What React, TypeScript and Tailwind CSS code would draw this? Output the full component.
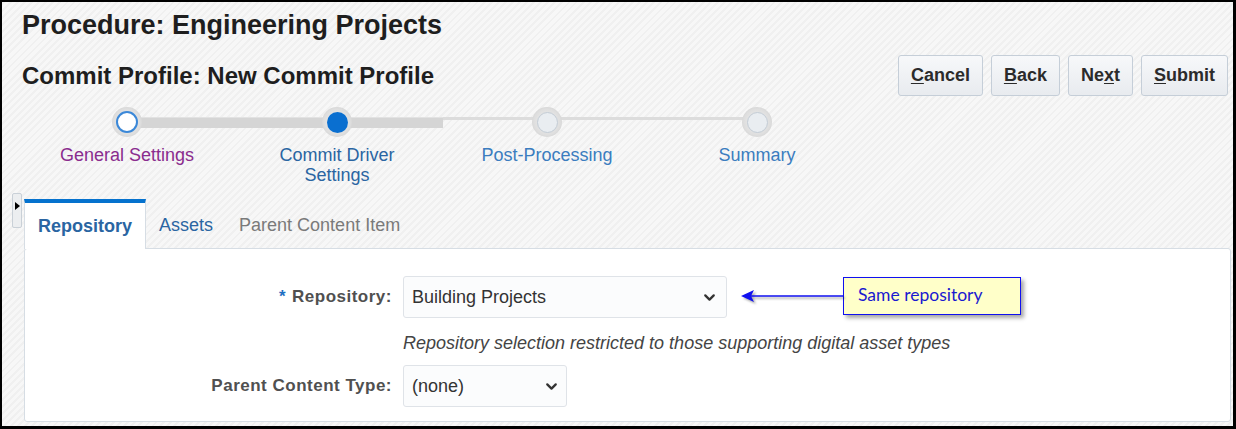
import { ChevronDown } from 'lucide-react';

const steps = [
  { label: ['General Settings'], state: 'visited' },
  { label: ['Commit Driver', 'Settings'], state: 'current' },
  { label: ['Post-Processing'], state: 'todo' },
  { label: ['Summary'], state: 'todo' },
];

const Mnemonic = ({ text, at }: { text: string; at: number }) => (
  <span>
    {text.slice(0, at)}
    <span className="underline underline-offset-2">{text[at]}</span>
    {text.slice(at + 1)}
  </span>
);

const buttons = [
  { text: 'Cancel', at: 0 },
  { text: 'Back', at: 0 },
  { text: 'Next', at: 2 },
  { text: 'Submit', at: 0 },
];

function StepDot({ state }: { state: string }) {
  return (
    <div className="w-[30px] h-[30px] rounded-full bg-[radial-gradient(circle,#f2f2f2_0%,#dedede_62%,#d2d2d2_80%,#e6e6e6_100%)] flex items-center justify-center">
      {state === 'visited' && <div className="w-[22px] h-[22px] rounded-full bg-white border-2 border-[#3b88d8]" />}
      {state === 'current' && <div className="w-[21px] h-[21px] rounded-full bg-[#0a6fd0]" />}
      {state === 'todo' && <div className="w-[21px] h-[21px] rounded-full bg-[#e9edf1] border border-[#c3ccd5]" />}
    </div>
  );
}

export default function App() {
  return (
    <div className="w-[1236px] h-[429px] border-2 border-r-[3px] border-b-[3px] border-black bg-[image:repeating-linear-gradient(-45deg,#f7f7f7_0px,#f7f7f7_3px,#f0f0f0_3px,#f0f0f0_5px)] font-['Liberation_Sans',Arial,sans-serif] overflow-hidden">
      {/* Page title */}
      <div className="pl-5 pr-[5px] pt-[7px]">
        <h1 className="text-[27px] leading-[32px] font-bold text-[#1e1e1e]">Procedure: Engineering Projects</h1>

        <div className="mt-[14px] flex items-center justify-between">
          <h2 className="text-[24px] leading-[28px] font-bold text-[#1e1e1e]">Commit Profile: New Commit Profile</h2>
          <div className="flex gap-2">
            {buttons.map((b) => (
              <button
                key={b.text}
                className="h-[41px] px-[12px] rounded-[3px] border border-[#c5ced8] bg-[linear-gradient(#f7f8fa,#e8ebef)] text-[18px] font-bold text-[#2b2b2b]"
              >
                <Mnemonic text={b.text} at={b.at} />
              </button>
            ))}
          </div>
        </div>

        {/* Train */}
        <div className="relative mt-[11px] flex">
          <div className="absolute left-[105px] top-[10px] w-[316px] h-[11px] bg-[#d5d5d5] border-t border-[#e2e2e2]" />
          <div className="absolute left-[421px] top-[10px] w-[315px] h-[3px] bg-[#dcdcdc]" />
          {steps.map((s, i) => (
            <div key={i} className="relative w-[210px] flex flex-col items-center">
              <StepDot state={s.state} />
              <div
                className={
                  'mt-2 text-[18px] leading-[20px] text-center ' +
                  (s.state === 'visited' ? 'text-[#8a2c8e]' : s.state === 'current' ? 'text-[#2a65a2]' : 'text-[#3b7dbf]')
                }
              >
                {s.label.map((l) => (
                  <div key={l}>{l}</div>
                ))}
              </div>
            </div>
          ))}
        </div>
      </div>

      {/* Tabs + panel */}
      <div className="mt-2 pl-[10px] pr-[2px] flex">
        <div className="w-[10px] h-[35px] mr-[2px] rounded-[2px] border border-[#c9d0d7] bg-[#eceef0] flex justify-center pt-[8px]">
          <div className="w-0 h-0 border-y-[4px] border-y-transparent border-l-[5px] border-l-black" />
        </div>
        <div className="flex-1 flex flex-col">
          <div className="mt-[6px] flex items-end">
            <div className="h-[50px] -mb-px px-[13px] border-t-4 border-t-[#0572ce] border-x border-x-[#d6dde4] bg-white flex items-center relative z-10">
              <span className="text-[18px] font-bold text-[#2a65a2]">Repository</span>
            </div>
            <div className="h-[46px] px-[13px] flex items-center text-[18px] text-[#2a65a2]">Assets</div>
            <div className="h-[46px] px-[13px] flex items-center text-[18px] text-[#7a7a7a]">Parent Content Item</div>
          </div>
          <div className="h-[174px] rounded-[3px] border border-[#d6dde4] bg-white pt-[27px]">
            <div className="flex items-center">
              <div className="w-[367px] text-right text-[17px] tracking-[0.5px] font-bold text-[#505050]">
                <span className="text-[#1f6fc2] mr-[6px]">*</span>Repository:
              </div>
              <div className="ml-[11px] w-[324px] h-[42px] rounded-[3px] border border-[#dfe3e8] bg-[#fbfcfd] flex items-center justify-between pl-2 pr-[8px]">
                <span className="text-[18px] text-[#333]">Building Projects</span>
                <ChevronDown size={17} strokeWidth={3.2} className="text-[#333]" />
              </div>
              <svg width="102" height="18" viewBox="0 0 102 18" className="ml-[14px] -mt-[3px] drop-shadow-[2px_2px_1px_rgba(0,0,0,0.35)]">
                <path d="M0 9 L13 3 L10 9 L13 15 Z" fill="#1010f0" />
                <line x1="10" y1="9" x2="102" y2="9" stroke="#1010f0" strokeWidth="1.5" />
              </svg>
              <div className="-mt-[3px] w-[178px] h-[38px] border-[1.5px] border-[#1010f0] bg-[#ffffc9] shadow-[3px_3px_4px_rgba(0,0,0,0.35)] flex items-center pl-[14px] font-['Lato',sans-serif] text-[17.5px] text-[#1a1ad0]">
                Same repository
              </div>
            </div>
            <div className="ml-[378px] mt-[14px] text-[18px] leading-[22px] italic text-[#444]">
              Repository selection restricted to those supporting digital asset types
            </div>
            <div className="mt-[11px] flex items-center">
              <div className="w-[367px] text-right text-[17px] tracking-[0.5px] font-bold text-[#505050]">Parent Content Type:</div>
              <div className="ml-[11px] w-[164px] h-[42px] rounded-[3px] border border-[#dfe3e8] bg-[#fbfcfd] flex items-center justify-between pl-2 pr-[6px]">
                <span className="text-[18px] text-[#333]">(none)</span>
                <ChevronDown size={17} strokeWidth={3.2} className="text-[#333]" />
              </div>
            </div>
          </div>
        </div>
      </div>
    </div>
  );
}
